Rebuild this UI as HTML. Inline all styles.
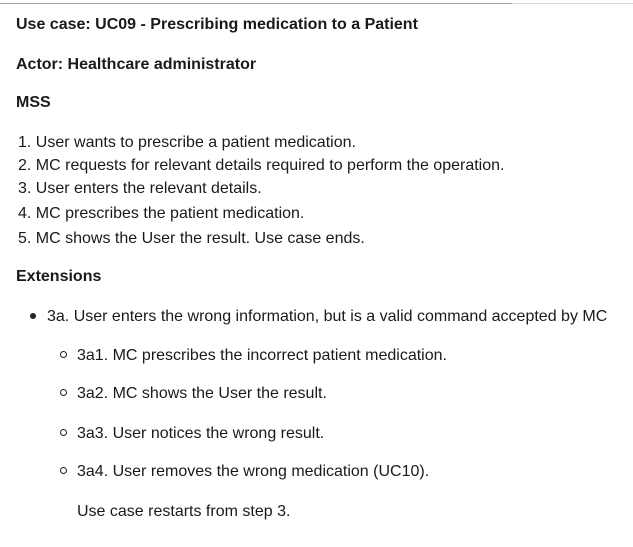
<!DOCTYPE html>
<html><head><meta charset="utf-8"><style>
html,body{margin:0;padding:0;background:#fff;width:633px;height:547px;overflow:hidden;position:relative}
body{font-family:"Liberation Sans",sans-serif;font-size:16px;color:#1a1a1a}
.l{position:absolute;line-height:20px;white-space:nowrap}
.b{font-weight:bold;font-size:16px;letter-spacing:0}
.topline{position:absolute;left:0;top:3px;width:512px;height:1px;background:#a0a0a0}
.topline2{position:absolute;left:512px;top:3px;width:121px;height:1px;background:#d8d8d8}
.dot{position:absolute;width:6px;height:6px;border-radius:50%;background:#222}
.circ{position:absolute;width:5px;height:5px;border-radius:50%;border:1px solid #222}
</style></head><body>
<div class="topline"></div><div class="topline2"></div>
<div class="l b" style="left:16px;top:15px">Use case: UC09 - Prescribing medication to a Patient</div>
<div class="l b" style="left:16px;top:55px">Actor: Healthcare administrator</div>
<div class="l b" style="left:16px;top:93px">MSS</div>
<div class="l" style="left:18px;top:133px">1. User wants to prescribe a patient medication.</div>
<div class="l" style="left:18px;top:156px">2. MC requests for relevant details required to perform the operation.</div>
<div class="l" style="left:18px;top:179px">3. User enters the relevant details.</div>
<div class="l" style="left:18px;top:204px">4. MC prescribes the patient medication.</div>
<div class="l" style="left:18px;top:229px">5. MC shows the User the result. Use case ends.</div>
<div class="l b" style="left:16px;top:267px">Extensions</div>
<div class="dot" style="left:30px;top:313px"></div>
<div class="l" style="left:47px;top:307px">3a. User enters the wrong information, but is a valid command accepted by MC</div>
<div class="circ" style="left:60px;top:351px"></div>
<div class="l" style="left:77px;top:346px">3a1. MC prescribes the incorrect patient medication.</div>
<div class="circ" style="left:60px;top:389px"></div>
<div class="l" style="left:77px;top:384px">3a2. MC shows the User the result.</div>
<div class="circ" style="left:60px;top:429px"></div>
<div class="l" style="left:77px;top:424px">3a3. User notices the wrong result.</div>
<div class="circ" style="left:60px;top:467px"></div>
<div class="l" style="left:77px;top:462px">3a4. User removes the wrong medication (UC10).</div>
<div class="l" style="left:77px;top:502px">Use case restarts from step 3.</div>
</body></html>
